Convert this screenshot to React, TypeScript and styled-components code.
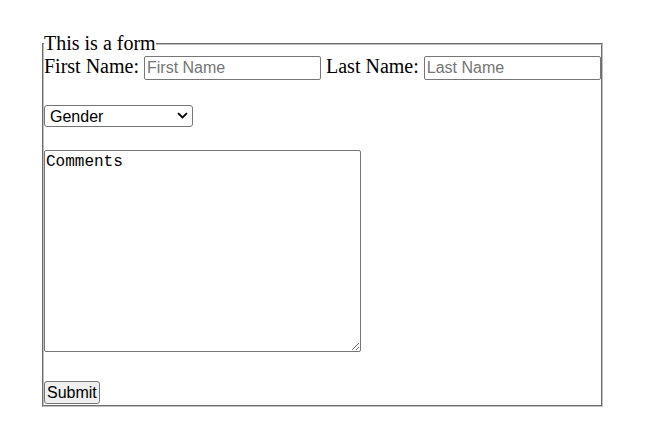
import React from "react";
import styled, { createGlobalStyle } from "styled-components";

const Global = createGlobalStyle`
  html, body { margin: 0; padding: 0; background: #fff; }
  body { font-family: "Liberation Serif", "Times New Roman", serif; color: #000; }
`;

const Page = styled.div`
  padding: 32px 0 0 42px;
`;

const Fieldset = styled.fieldset`
  box-sizing: border-box;
  width: 561px;
  margin: 0;
  padding: 0 0 1px 0;
  border: 2px groove #c0c0c0;
  display: flex;
  flex-direction: column;
  align-items: flex-start;
  font-family: "Liberation Serif", "Times New Roman", serif;
  font-size: 20px;
`;

const Legend = styled.legend`
  padding: 0;
  font-size: 20px;
  line-height: 23px;
`;

const NameRow = styled.div`
  display: flex;
  align-items: baseline;
  gap: 5px;
  height: 24px;
`;

const Label = styled.label`
  font-size: 20px;
  line-height: 23px;
  white-space: nowrap;
`;

const TextInput = styled.input`
  box-sizing: border-box;
  width: 177px;
  height: 24px;
  margin: 0;
  padding: 1px 2px;
  border: 1px solid #767676;
  border-radius: 2px;
  font-family: "Liberation Sans", Arial, sans-serif;
  font-size: 16px;
  color: #000;
  background: #fff;
  &::placeholder { color: #757575; }
`;

const SelectWrap = styled.div`
  position: relative;
  display: flex;
  margin-top: 26px;
`;

const GenderSelect = styled.select`
  appearance: none;
  box-sizing: border-box;
  width: 149px;
  height: 22px;
  margin: 0;
  padding: 0 20px 0 5px;
  border: 1px solid #767676;
  border-radius: 3px;
  background: #fff;
  font-family: "Liberation Sans", Arial, sans-serif;
  font-size: 16px;
  color: #000;
`;

const Chevron = styled.svg`
  position: absolute;
  right: 5px;
  top: 7px;
  pointer-events: none;
`;

const Comments = styled.textarea`
  box-sizing: border-box;
  width: 317px;
  height: 202px;
  margin: 23px 0 0 0;
  padding: 2px 1px;
  border: 1px solid #767676;
  border-radius: 2px;
  font-family: "Liberation Mono", "Courier New", monospace;
  font-size: 16px;
  line-height: 1.15;
  color: #000;
  background: #fff;
`;

const SubmitButton = styled.button`
  box-sizing: border-box;
  height: 23px;
  margin: 29px 0 0 0;
  padding: 0 2px;
  border: 1px solid #767676;
  border-radius: 3px;
  background: #efefef;
  font-family: "Liberation Sans", Arial, sans-serif;
  font-size: 16px;
  color: #000;
`;

export default function App() {
  return (
    <>
      <Global />
      <Page>
        <form onSubmit={(e) => e.preventDefault()}>
          <Fieldset>
            <Legend>This is a form</Legend>
            <NameRow>
              <Label htmlFor="fn">First Name:</Label>
              <TextInput id="fn" placeholder="First Name" />
              <Label htmlFor="ln">Last Name:</Label>
              <TextInput id="ln" placeholder="Last Name" />
            </NameRow>
            <SelectWrap>
              <GenderSelect defaultValue="">
                <option value="">Gender</option>
                <option value="m">Male</option>
                <option value="f">Female</option>
              </GenderSelect>
              <Chevron width="11" height="7" viewBox="0 0 11 7">
                <path d="M1 1.2 L5.5 5.5 L10 1.2" fill="none" stroke="#000" strokeWidth="1.8" />
              </Chevron>
            </SelectWrap>
            <Comments defaultValue="Comments" />
            <SubmitButton type="submit">Submit</SubmitButton>
          </Fieldset>
        </form>
      </Page>
    </>
  );
}
